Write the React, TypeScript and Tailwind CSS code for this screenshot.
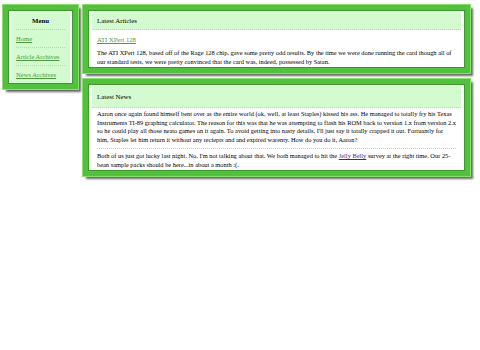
import React from "react";

const box =
  "border-[5px] border-[#52c23e] bg-white shadow-[inset_0_0_0_1px_#3c9a2c,0_0_0_1px_#8ade70,3px_3px_2px_rgba(0,0,0,0.6)]";

export default function App() {
  return (
    <div
      className="flex items-start gap-[5px] pl-[3px] pr-[10px] pt-[5px] text-black w-[480px] h-[350px] bg-white"
      style={{ fontFamily: '"Liberation Serif", "Times New Roman", serif' }}
    >
      <div className={`${box} w-[75px] shrink-0 pt-[2px] pb-[1px] px-[3px]`}>
        <div className="bg-[#d3fbcf] px-[5px]">
          <div className="text-center font-bold text-[6.8px] leading-[9px] py-[4px] border-b border-dotted border-[#b5d9b0]">
            Menu
          </div>
          {["Home", "Article Archives", "News Archives"].map((t, i) => (
            <div
              key={t}
              className={`text-[6.6px] leading-[8px] pt-[5px] pb-[4px] ${i < 2 ? "border-b border-dotted border-[#b5d9b0]" : ""}`}
            >
              <a className="text-[#4a9a3e] underline whitespace-nowrap">{t}</a>
            </div>
          ))}
        </div>
      </div>
      <div className="flex-1 flex flex-col gap-[6px]">
        <div className={`${box} pt-[2px] pb-[2px] px-[4px]`}>
          <div className="bg-[#d3fbcf] px-[5px] py-[4px] text-[6.9px] leading-[9px] border-b border-dotted border-[#b5d9b0]">
            Latest Articles
          </div>
          <div className="px-[5px] pt-[6px] text-[6.4px] leading-[8.5px]">
            <div className="mb-[5px] leading-[8px] text-[6.6px]">
              <a className="text-[#4a9a3e] underline">ATI XPert 128</a>
            </div>
            <p>
              The ATI XPert 128, based off of the Rage 128 chip, gave some pretty odd results. By the time we were done
              running the card though all of our standard tests, we were pretty convinced that the card was, indeed,
              possessed by Satan.
            </p>
          </div>
        </div>
        <div className={`${box} pt-[2px] pb-[2px] px-[4px]`}>
          <div className="bg-[#d3fbcf] px-[5px] py-[6px] text-[6.9px] leading-[9px] border-b border-dotted border-[#b5d9b0]">
            Latest News
          </div>
          <div className="px-[5px] pt-[2px] text-[6.4px] leading-[8.5px]">
            <p className="pb-[4px] border-b border-dotted border-[#c8c8c8]">
              Aaron once again found himself bent over as the entire world (ok, well, at least Staples) kissed his ass.
              He managed to totally fry his Texas Instruments TI-89 graphing calculator. The reason for this was that he
              was attempting to flash his ROM back to version 1.x from version 2.x so he could play all those neato games
              on it again. To avoid getting into nasty details, I'll just say it totally crapped it out. Fortuantly for
              him, Staples let him return it without any reciepts and and expired warenty. How do you do it, Aaron?
            </p>
            <p className="pt-[3px]">
              Both of us just got lucky last night. No, I'm not talking about that. We both managed to hit the{" "}
              <a className="text-[#551a8b] underline">Jelly Belly</a> survey at the right time. Our 25-bean sample
              packs should be here...in about a month :(.
            </p>
          </div>
        </div>
      </div>
    </div>
  );
}
